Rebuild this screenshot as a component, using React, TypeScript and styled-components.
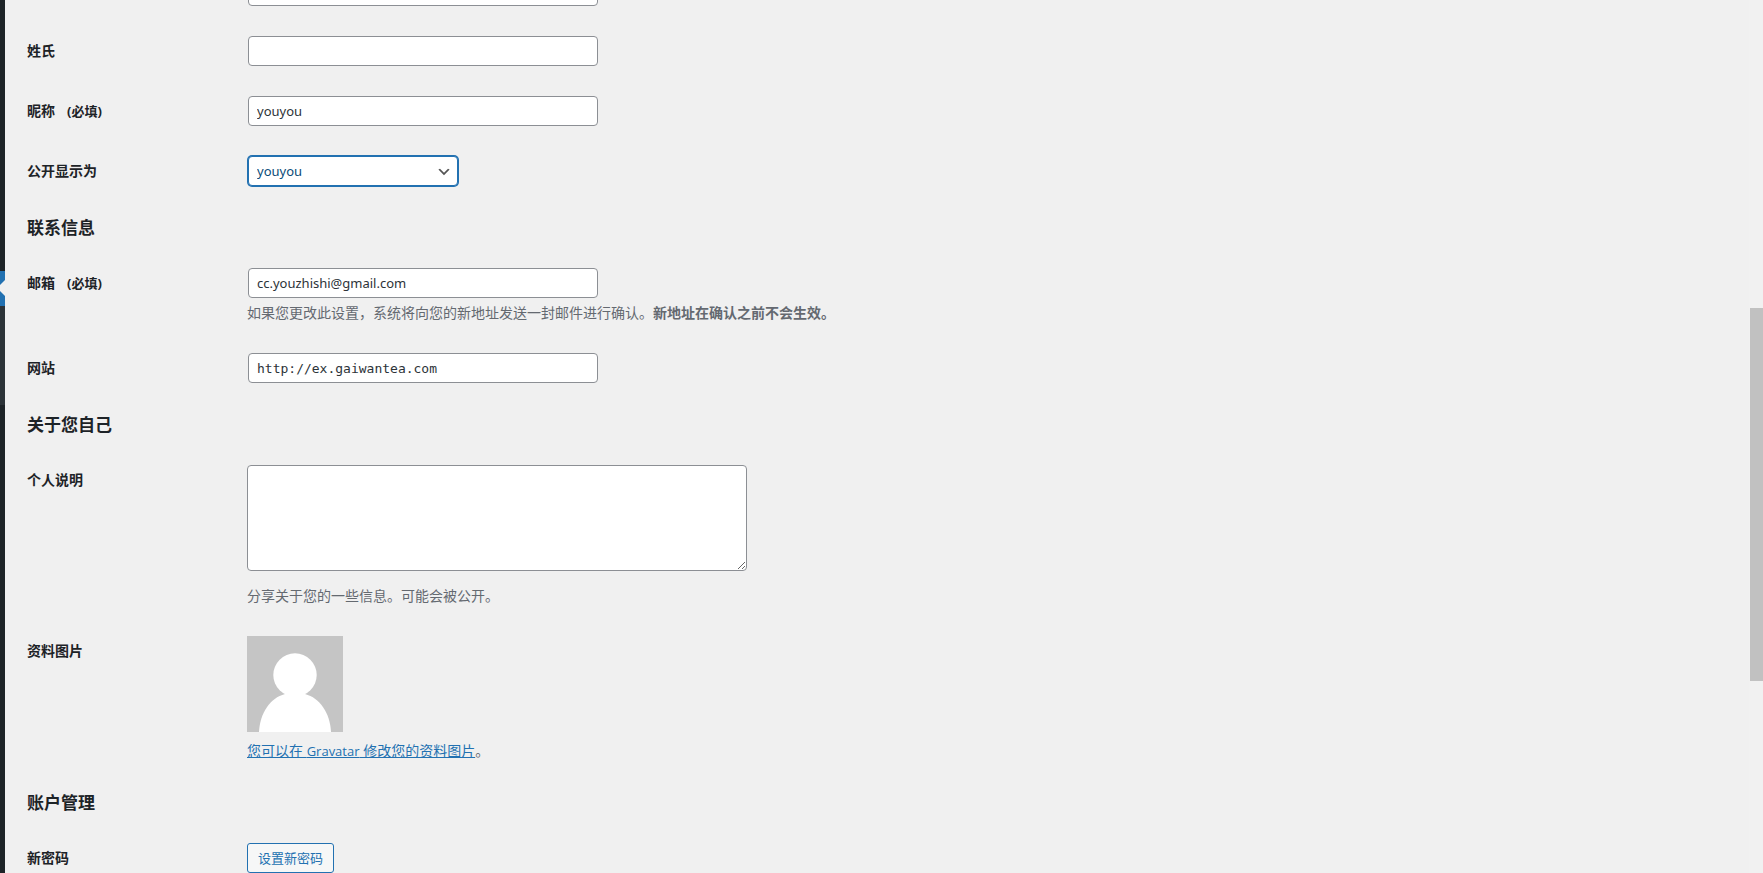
import React, { useState } from 'react';
import styled, { createGlobalStyle, css } from 'styled-components';

const GlobalStyle = createGlobalStyle`
  *, *::before, *::after { box-sizing: border-box; }
  body {
    margin: 0;
    background: #f0f0f0;
    color: #3c434a;
    font: 14px/21px "Open Sans", "Noto Sans CJK SC", sans-serif;
  }
`;

const Screen = styled.div`
  display: flex;
  height: 100vh;
  overflow: hidden;
`;

const MenuEdge = styled.nav`
  flex: 0 0 5px;
  display: flex;
  flex-direction: column;
  padding-top: 271px;
  overflow: hidden;
  background: #1d2327;
`;

const CurrentMenu = styled.div`
  position: relative;
  height: 35px;
  background: #2271b1;

  &::after {
    content: "";
    position: absolute;
    right: 0;
    top: 9px;
    border: 8px solid transparent;
    border-right-color: #f0f0f0;
  }
`;

const SubMenu = styled.div`
  height: 99px;
  background: #2c3338;
`;

/* The page is scrolled part-way: the first row is cut by the window's top edge. */
const Main = styled.main`
  flex: 1;
  min-width: 0;
  padding: 0 20px 0 22px;
`;

const Form = styled.form`
  margin-top: -39px;
`;

const SectionTitle = styled.h2`
  margin: 18px 0 16px;
  color: #1d2327;
  font-size: 17px;
  line-height: 18px;
  font-weight: 700;
`;

const FormRow = styled.div`
  display: grid;
  grid-template-columns: 210px minmax(0, 1fr);
  padding: 15px 0;
`;

const labelText = css`
  padding: 4px 10px 0 0;
  color: #1d2327;
  font-weight: 700;
`;

const Label = styled.label`
  ${labelText}
`;

const RowCaption = styled.div`
  ${labelText}
`;

const Required = styled.span`
  margin-left: 12px;
  font-size: 13px;
`;

const Field = styled.div`
  grid-column: 2;
  padding: 0 10px;
`;

const control = css`
  border: 1px solid #8c8f94;
  border-radius: 4px;
  background: #fff;
  color: #2c3338;
  font-family: "Noto Sans", "Noto Sans CJK SC", sans-serif;
  font-size: 13px;
  outline: none;
`;

const TextInput = styled.input<{ $code?: boolean }>`
  ${control}
  display: block;
  width: 350px;
  max-width: 100%;
  height: 30px;
  margin: 0 1px;
  padding: 0 8px;
  ${(p) => p.$code && css`
    font-family: "DejaVu Sans Mono", monospace;
  `}
`;

const SelectBox = styled.div`
  position: relative;
  width: 210px;
  margin: 0 1px;
`;

const Select = styled.select`
  ${control}
  display: block;
  width: 100%;
  height: 30px;
  padding: 0 24px 0 8px;
  appearance: none;
  border-color: #2271b1;
  box-shadow: 0 0 0 1px #2271b1;
  color: #0a4b78;
`;

const Chevron = styled.svg`
  position: absolute;
  right: 6px;
  top: 8px;
  width: 16px;
  height: 16px;
  fill: #555;
  pointer-events: none;
`;

const TextArea = styled.textarea`
  ${control}
  display: block;
  width: 500px;
  max-width: 100%;
  height: 106px;
  padding: 2px 6px;
`;

const Description = styled.p<{ $gap: number }>`
  margin: ${(p) => p.$gap}px 0 0;
  color: #646970;
`;

const Avatar = styled.svg`
  display: block;
  width: 96px;
  height: 96px;
`;

const Link = styled.a`
  color: #2271b1;
  text-decoration: underline;
`;

const LatinName = styled.span`
  font-size: 13px;
  line-height: 16px;
`;

const Button = styled.button`
  display: block;
  height: 30px;
  padding: 0 10px;
  border: 1px solid #2271b1;
  border-radius: 3px;
  background: #f6f7f7;
  color: #2271b1;
  font-family: inherit;
  font-size: 13px;
  line-height: 26px;
`;

const ScrollRail = styled.div`
  flex: 0 0 14px;
  display: grid;
  grid-template-rows: 308fr 373fr 192fr;
  padding-left: 1px;
  background: #f1f1f1;
`;

const ScrollThumb = styled.div`
  grid-row: 2;
  background: #c1c1c1;
`;

interface TextRowProps {
  id: string;
  label: string;
  required?: boolean;
  initial?: string;
  type?: string;
  code?: boolean;
  children?: React.ReactNode;
}

function TextRow({ id, label, required, initial = '', type = 'text', code, children }: TextRowProps) {
  const [value, setValue] = useState(initial);
  return (
    <FormRow>
      <Label htmlFor={id}>
        {label}
        {required && <Required>(必填)</Required>}
      </Label>
      <Field>
        <TextInput id={id} type={type} $code={code} value={value} onChange={(e) => setValue(e.target.value)} />
        {children}
      </Field>
    </FormRow>
  );
}

export default function App() {
  return (
    <>
      <GlobalStyle />
      <Screen>
        <MenuEdge>
          <CurrentMenu />
          <SubMenu />
        </MenuEdge>
        <Main>
          <Form onSubmit={(e) => e.preventDefault()}>
            <FormRow>
              <Field>
                <TextInput id="first_name" type="text" aria-label="名字" />
              </Field>
            </FormRow>
            <TextRow id="last_name" label="姓氏" />
            <TextRow id="nickname" label="昵称" required initial="youyou" />
            <FormRow>
              <Label htmlFor="display_name">公开显示为</Label>
              <Field>
                <SelectBox>
                  <Select id="display_name" defaultValue="youyou">
                    <option value="youyou">youyou</option>
                  </Select>
                  <Chevron viewBox="0 0 20 20" aria-hidden="true">
                    <path d="M5 6l5 5 5-5 2 1-7 7-7-7 2-1z" />
                  </Chevron>
                </SelectBox>
              </Field>
            </FormRow>

            <SectionTitle>联系信息</SectionTitle>
            <TextRow id="email" label="邮箱" required type="email" initial="cc.youzhishi@gmail.com">
              <Description $gap={4}>
                如果您更改此设置，系统将向您的新地址发送一封邮件进行确认。<strong>新地址在确认之前不会生效。</strong>
              </Description>
            </TextRow>
            <TextRow id="url" label="网站" type="url" code initial="http://ex.gaiwantea.com" />

            <SectionTitle>关于您自己</SectionTitle>
            <FormRow>
              <Label htmlFor="description">个人说明</Label>
              <Field>
                <TextArea id="description" />
                <Description $gap={14}>分享关于您的一些信息。可能会被公开。</Description>
              </Field>
            </FormRow>
            <FormRow>
              <RowCaption>资料图片</RowCaption>
              <Field>
                <Avatar viewBox="0 0 96 96" aria-hidden="true">
                  <rect width="96" height="96" fill="#c5c5c5" />
                  <circle cx="48" cy="39" r="21.7" fill="#fff" />
                  <path d="M12 96C13 77 23 62 38 58H58C73 62 83 77 84 96Z" fill="#fff" />
                </Avatar>
                <Description $gap={8}>
                  <Link href="#gravatar">您可以在 <LatinName>Gravatar</LatinName> 修改您的资料图片</Link>。
                </Description>
              </Field>
            </FormRow>

            <SectionTitle>账户管理</SectionTitle>
            <FormRow>
              <RowCaption>新密码</RowCaption>
              <Field>
                <Button type="button">设置新密码</Button>
              </Field>
            </FormRow>
          </Form>
        </Main>
        <ScrollRail>
          <ScrollThumb />
        </ScrollRail>
      </Screen>
    </>
  );
}
